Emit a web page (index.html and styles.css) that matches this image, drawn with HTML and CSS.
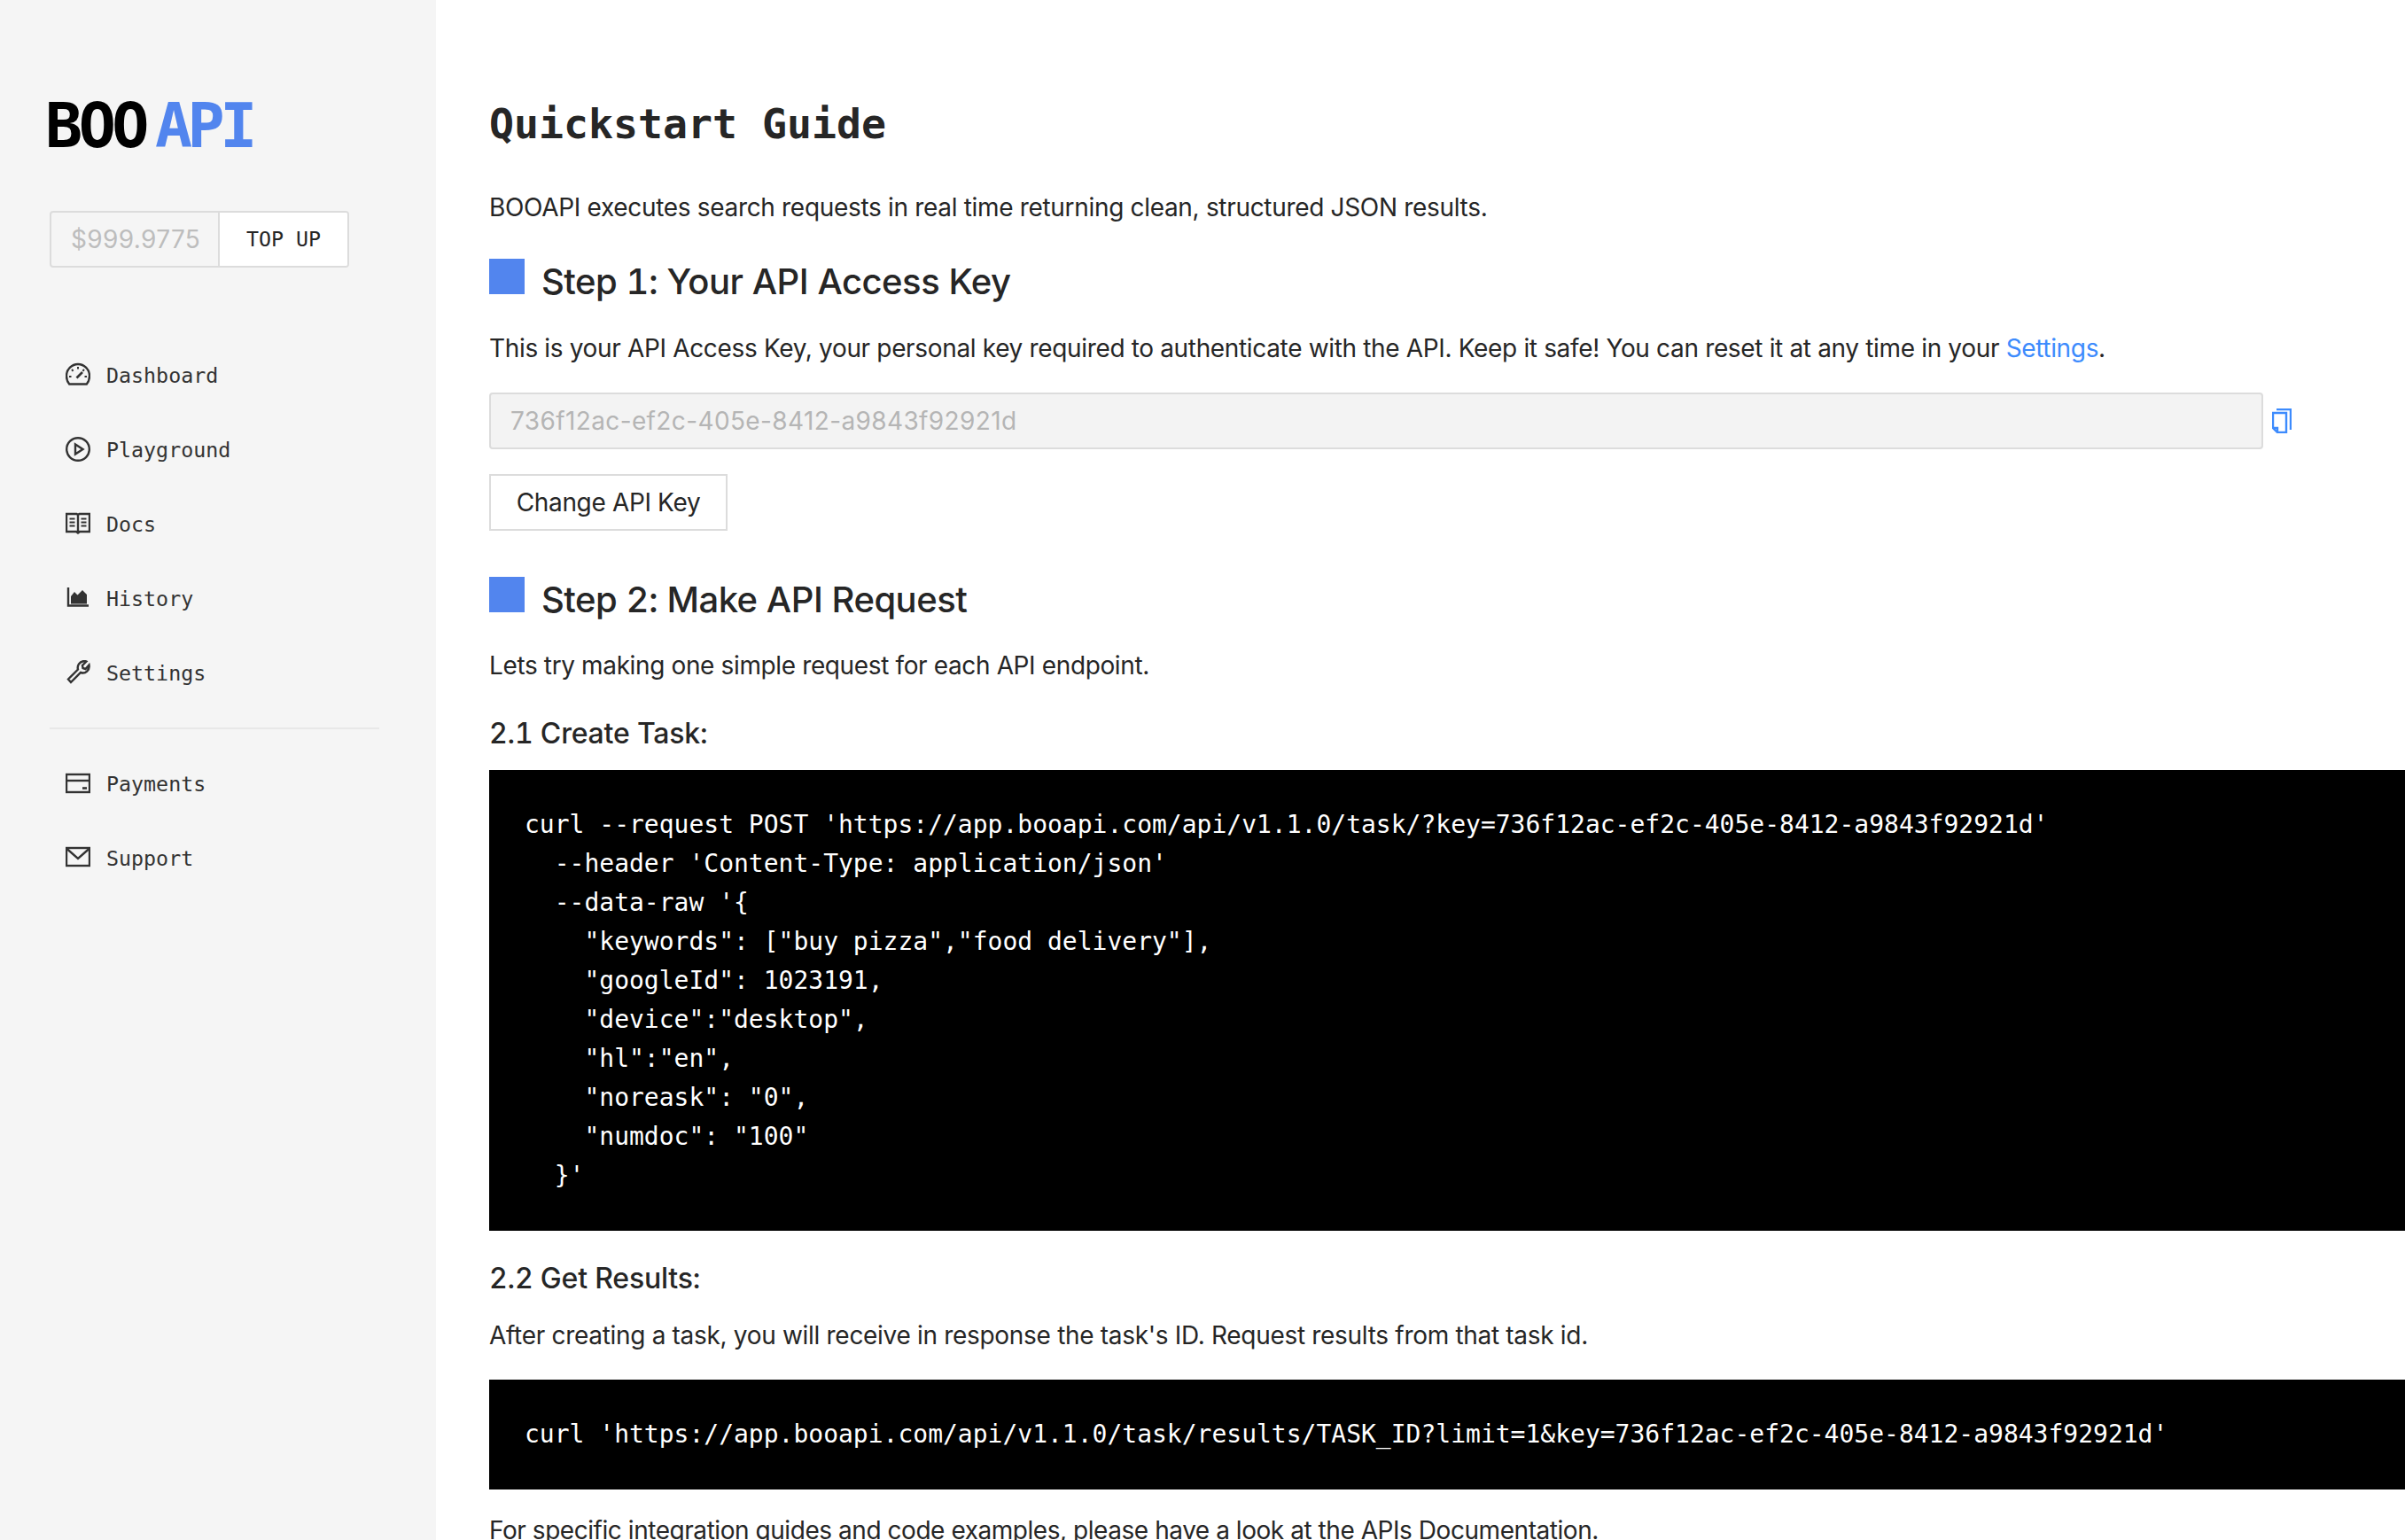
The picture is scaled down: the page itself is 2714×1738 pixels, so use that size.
FILE: index.html
```html
<!DOCTYPE html>
<html lang="en">
<head>
<meta charset="utf-8">
<title>Quickstart Guide</title>
<link rel="stylesheet" href="styles.css">
</head>
<body>
<div class="app">
  <aside class="sidebar">
    <div class="logo"><span>BOO</span><span class="logo-api">API</span></div>
    <div class="balance">
      <div class="balance-value">$999.9775</div>
      <div class="balance-btn">TOP UP</div>
    </div>
    <nav class="nav">
      <a class="nav-item"><svg class="ico" viewBox="0 0 28 28"><path d="M4.2 24.500C2.300 22.200 1 19.300 1 15.200 1 8 6.800 2 14 2s13 6 13 13.200c0 4.100-1.300 7-3.200 9.300z"/><path d="M14 5v2.500M7 8l1.600 1.700M21 8l-1.600 1.700M4 16h2.500M24 16h-2.500" stroke-width="2"/><path d="M12.500 17.500 19 11" stroke-width="2.600"/></svg><span>Dashboard</span></a>
      <a class="nav-item"><svg class="ico" viewBox="0 0 28 28"><circle cx="14" cy="14" r="12.800"/><path d="M11 8.500v11l8.500-5.500z"/></svg><span>Playground</span></a>
      <a class="nav-item"><svg class="ico" viewBox="0 0 28 28"><path d="M1 3h11.500L14 4l1.500-1H27v20H16l-2 1.500-2-1.500H1zM14 4v19"/><path d="M4.500 8.500h6M4.500 12.500h6M4.500 16.500h6M17.500 8.500h6M17.500 12.500h6M17.500 16.500h6" stroke-width="1.800"/></svg><span>Docs</span></a>
      <a class="nav-item"><svg class="ico" viewBox="0 0 28 28"><path d="M3 2v20.500h23"/><path class="fill" d="M6 20.500V12l4-5 3.500 3.500L19 5l5 5v10.500z"/></svg><span>History</span></a>
      <a class="nav-item"><svg class="ico" viewBox="0 0 28 28"><path d="M3 23.500 14 12.500c-1.200-4 1.500-9 7-9.500 1 0 2 .2 2.500.5L19 8l.5 3 3 1 4-4.500c1 5.500-4 10.500-9.500 8.500L6 27z" transform="translate(0 -2)"/></svg><span>Settings</span></a>
    </nav>
    <div class="nav-divider"></div>
    <nav class="nav">
      <a class="nav-item"><svg class="ico" viewBox="0 0 28 28"><rect x="1" y="4" width="26" height="20"/><path d="M1 11h26"/><path d="M19 19.500h5" stroke-width="2.600"/></svg><span>Payments</span></a>
      <a class="nav-item"><svg class="ico" viewBox="0 0 28 28"><rect x="1" y="3" width="26" height="20"/><path d="M1 3.500 14 15 27 3.500"/></svg><span>Support</span></a>
    </nav>
  </aside>
  <main class="main">
    <h1 class="title">Quickstart Guide</h1>
    <p class="text text-intro">BOOAPI executes search requests in real time returning clean, structured JSON results.</p>
    <h2 class="step step-one"><span class="step-mark"></span><span>Step 1: Your API Access Key</span></h2>
    <p class="text text-key">This is your API Access Key, your personal key required to authenticate with the API. Keep it safe! You can reset it at any time in your <a class="link">Settings</a>.</p>
    <div class="key-row">
      <div class="key-input">736f12ac-ef2c-405e-8412-a9843f92921d</div>
      <svg class="copy" viewBox="0 0 22 28"><path d="M5 1h16v23"/><path d="M1 5h15v22H6l-5-5zM1 22h5v5"/></svg>
    </div>
    <button class="btn">Change API Key</button>
    <h2 class="step step-two"><span class="step-mark"></span><span>Step 2: Make API Request</span></h2>
    <p class="text text-try">Lets try making one simple request for each API endpoint.</p>
    <h3 class="sub sub-one">2.1 Create Task:</h3>
<pre class="code">curl --request POST 'https://app.booapi.com/api/v1.1.0/task/?key=736f12ac-ef2c-405e-8412-a9843f92921d'
  --header 'Content-Type: application/json'
  --data-raw '{
    "keywords": ["buy pizza","food delivery"],
    "googleId": 1023191,
    "device":"desktop",
    "hl":"en",
    "noreask": "0",
    "numdoc": "100"
  }'</pre>
    <h3 class="sub sub-two">2.2 Get Results:</h3>
    <p class="text text-after">After creating a task, you will receive in response the task's ID. Request results from that task id.</p>
<pre class="code code-two">curl 'https://app.booapi.com/api/v1.1.0/task/results/TASK_ID?limit=1&amp;key=736f12ac-ef2c-405e-8412-a9843f92921d'</pre>
    <p class="text text-last">For specific integration guides and code examples, please have a look at the APIs Documentation.</p>
  </main>
</div>
</body>
</html>
```
FILE: styles.css
```css
* { box-sizing: border-box; }
html, body { margin: 0; height: 100%; overflow: hidden; background: #fff; }
body { font-family: Inter, "Liberation Sans", sans-serif; color: #262626; }
.app { display: flex; height: 1738px; overflow: hidden; }

.sidebar { flex: 0 0 492px; background: #f5f5f5; padding: 106px 64px 0 56px; }
.logo { display: flex; gap: 11px; height: 72px; margin-left: -5px; align-items: center; font-family: "DejaVu Sans Mono", monospace; font-weight: 700; font-size: 70px; letter-spacing: -4.500px; color: #000; line-height: 72px; }
.logo-api { color: #5285ee; letter-spacing: -5.500px; }
.balance { display: flex; width: 338px; height: 64px; margin-top: 60px; border: 2px solid #dcdcdc; border-radius: 4px; }
.balance-value { flex: 0 0 190px; padding-left: 22px; font-size: 28px; letter-spacing: 0.350px; line-height: 60px; color: #bdbdbd; border-right: 2px solid #dcdcdc; }
.balance-btn { flex: 1; background: #fff; text-align: center; font-family: "DejaVu Sans Mono", monospace; font-size: 23.300px; line-height: 60px; color: #262626; border-radius: 0 2px 2px 0; }

.nav { display: flex; flex-direction: column; }
.nav-item { display: flex; align-items: center; gap: 18px; height: 84px; padding-left: 18px; font-family: "DejaVu Sans Mono", monospace; font-size: 23.300px; color: #333; }
.sidebar .balance + .nav { margin-top: 79px; }
.nav-divider { height: 2px; background: #e8e8e8; margin: 20px 0 19px; }
.ico { width: 28px; height: 28px; flex: none; fill: none; stroke: #333; stroke-width: 2.4; }
.ico .fill { fill: #333; stroke: none; }

.main { flex: 1; min-width: 0; padding-left: 60px; }
.title { margin: 0; padding-top: 110px; font-family: "DejaVu Sans Mono", monospace; font-weight: 700; font-size: 46.500px; line-height: 60px; color: #262626; }
.text { margin: 0; font-size: 28px; line-height: 40px; letter-spacing: -0.320px; color: #262626; white-space: nowrap; }
.text-intro { margin-top: 44px; }
.step { display: flex; gap: 19px; margin: 0; font-weight: 500; font-size: 40px; line-height: 48px; letter-spacing: -0.5px; font-variant-numeric: tabular-nums; color: #262626; }
.step-mark { flex: none; width: 40px; height: 40px; margin-top: -2px; background: #5285ee; }
.step-one { margin-top: 40px; }
.text-key { margin-top: 31px; letter-spacing: -0.343px; }
.link { color: #3d8bfd; }
.key-row { display: flex; align-items: center; gap: 10px; margin-top: 30px; width: 2036px; }
.key-input { width: 2002px; height: 64px; padding-left: 22px; background: #f3f3f3; border: 2px solid #dcdcdc; border-radius: 4px; font-size: 28px; letter-spacing: 0.380px; line-height: 60px; color: #b5b5b5; }
.copy { width: 22px; height: 28px; flex: none; fill: none; stroke: #3d8bfd; stroke-width: 2.4; }
.btn { display: block; width: 269px; height: 64px; margin-top: 28px; padding: 0; background: #fff; border: 2px solid #dcdcdc; font-family: Inter, "Liberation Sans", sans-serif; font-size: 28px; letter-spacing: -0.350px; color: #262626; }
.step-two { margin-top: 54px; }
.text-try { margin-top: 30px; letter-spacing: -0.370px; }
.sub { margin: 0; font-weight: 500; font-size: 32px; line-height: 40px; letter-spacing: -0.2px; font-variant-numeric: tabular-nums; color: #262626; }
.sub-one { margin-top: 37px; }
.code { margin: 21px 0 0; padding: 40px; background: #000; color: #fff; font-family: "DejaVu Sans Mono", monospace; font-size: 28px; line-height: 44px; overflow: hidden; }
.sub-two { margin-top: 34px; }
.text-after { margin-top: 24px; letter-spacing: -0.310px; }
.code-two { margin-top: 30px; }
.text-last { margin-top: 26px; letter-spacing: -0.450px; }
```
